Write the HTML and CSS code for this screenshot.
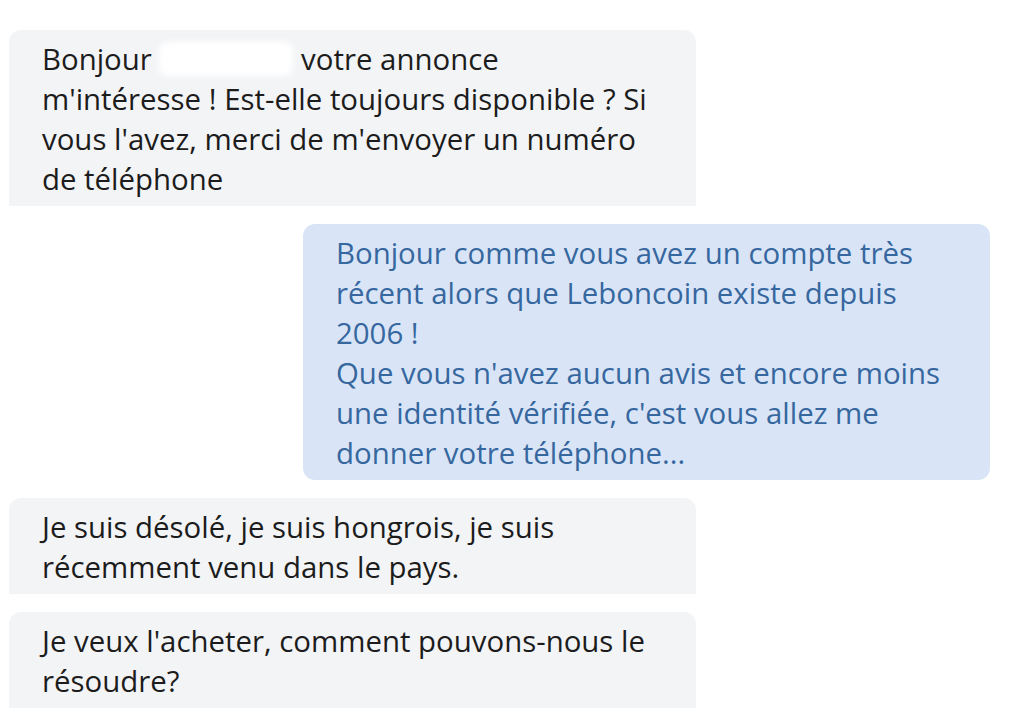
FILE: index.html
```html
<!DOCTYPE html>
<html lang="fr">
<head>
<meta charset="utf-8">
<title>Conversation</title>
<link rel="stylesheet" href="styles.css">
</head>
<body>
<main class="thread">
  <div class="msg msg-in">Bonjour <span class="blurred"></span> votre annonce<br>m'intéresse ! Est-elle toujours disponible ? Si vous l'avez, merci de m'envoyer un numéro de téléphone</div>
  <div class="msg msg-out">Bonjour comme vous avez un compte très récent alors que Leboncoin existe depuis 2006 !<br>Que vous n'avez aucun avis et encore moins une identité vérifiée, c'est vous allez me donner votre téléphone...</div>
  <div class="msg msg-in">Je suis désolé, je suis hongrois, je suis récemment venu dans le pays.</div>
  <div class="msg msg-in">Je veux l'acheter, comment pouvons-nous le résoudre?</div>
</main>
</body>
</html>
```

FILE: styles.css
```css
html, body {
  margin: 0;
  padding: 0;
  background: #ffffff;
}

body {
  font-family: "Open Sans", "DejaVu Sans", sans-serif;
  font-size: 29.4px;
  line-height: 40px;
  color: #1c1c1c;
}

.thread {
  display: flex;
  flex-direction: column;
  gap: 18px;
  padding: 30px 34px 0 9px;
}

.msg {
  box-sizing: border-box;
  width: 687px;
  padding: 9px 30px 7px 33px;
}

.msg-in {
  align-self: flex-start;
  background: #f3f4f6;
  border-radius: 12px 12px 0 0;
  color: #1c1c1c;
}

.msg-out {
  align-self: flex-end;
  background: #d9e5f6;
  border-radius: 12px;
  color: #36679f;
}

.blurred {
  display: inline-block;
  width: 134px;
  height: 34px;
  vertical-align: -6px;
  background: #ffffff;
  border-radius: 8px;
  filter: blur(3px);
}
```
